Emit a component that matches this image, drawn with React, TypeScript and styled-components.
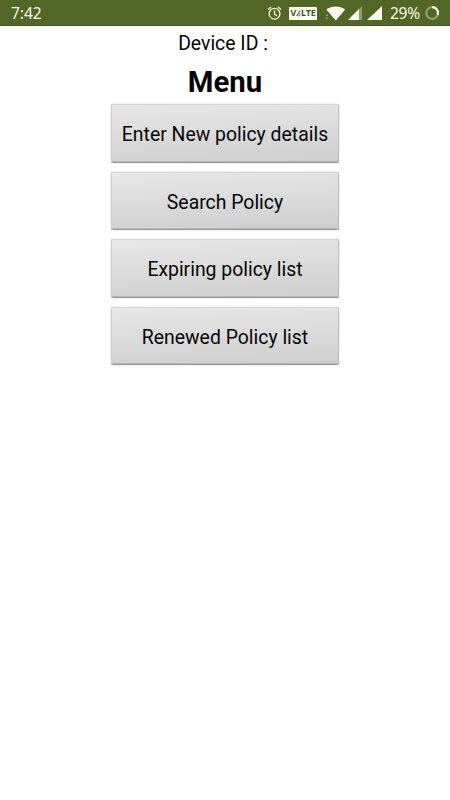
import React from "react";
import styled, { createGlobalStyle } from "styled-components";

const GlobalStyle = createGlobalStyle`
  * { box-sizing: border-box; }
  body { margin: 0; background: #fff; }
`;

const Screen = styled.div`
  width: 450px;
  height: 800px;
  background: #fff;
  color: #050505;
  font-family: Roboto, "Noto Sans", sans-serif;
  display: flex;
  flex-direction: column;
`;

const StatusBar = styled.header`
  height: 26px;
  flex: none;
  display: flex;
  align-items: center;
  padding: 0 10px 0 11px;
  background: #526625;
  border-bottom: 1px solid #435418;
  color: #f6f8ea;
  font-family: "Noto Sans", sans-serif;
  font-size: 15.6px;
  line-height: 26px;
`;

const Clock = styled.span`
  flex: 1;
  padding-top: 1px;
  letter-spacing: -0.1px;
`;

const StatusIcon = styled.svg<{ $gap: number }>`
  display: block;
  flex: none;
  margin-right: ${(p) => p.$gap}px;
`;

const VolteBadge = styled.span`
  width: 28px;
  height: 13px;
  margin: 1px 8px 0 0;
  display: flex;
  align-items: center;
  justify-content: center;
  background: #fbfcf4;
  color: #435320;
  font-size: 8.8px;
  font-weight: 700;
  letter-spacing: -0.1px;
  line-height: 13px;
`;

const Battery = styled.span`
  width: 31px;
  margin-right: 4px;
  padding-top: 1px;
  letter-spacing: -0.3px;
  white-space: nowrap;
`;

const Content = styled.main`
  display: flex;
  flex-direction: column;
  align-items: center;
`;

const DeviceLabel = styled.div`
  height: 35px;
  padding-right: 4px;
  font-size: 19.4px;
  line-height: 35px;
`;

const Title = styled.h1`
  margin: 0;
  height: 43px;
  font-size: 29.3px;
  font-weight: 700;
  line-height: 42px;
`;

const MenuList = styled.nav`
  display: grid;
  grid-auto-rows: 58.5px;
  gap: 9px;
  width: 228px;
`;

const MenuButton = styled.button`
  margin: 0;
  padding: 2.5px 0 0;
  border: 0;
  border-radius: 2px;
  background: linear-gradient(177deg, #e8e8e8, #cdcdcd);
  box-shadow: inset 0 1px 0 #d6d6d6, inset 1px 0 0 #d0d0d0, inset -1px 0 0 #bebebe,
    inset 0 -1.5px 0 #999, 0 0 2px rgba(0, 0, 0, 0.22);
  color: #050505;
  font: 400 19.4px Roboto, sans-serif;
  white-space: nowrap;
`;

const entries = [
  "Enter New policy details",
  "Search Policy",
  "Expiring policy list",
  "Renewed Policy list",
];

export default function App() {
  return (
    <Screen>
      <GlobalStyle />
      <StatusBar>
        <Clock>7:42</Clock>
        <StatusIcon $gap={7} width="15" height="16" viewBox="0 0 15 16" fill="none" stroke="#f6f8ea" strokeWidth="1.3">
          <circle cx="7.5" cy="8.8" r="5.4" />
          <path d="M7.5 5.5v3.6l2.4 1.5M1 4.6l3-2.5M14 4.6l-3-2.5" />
        </StatusIcon>
        <VolteBadge>
          <span>V</span>
          <svg width="5" height="9" viewBox="0 0 5 9" fill="none" stroke="#526625">
            <path d="M0.6 7L4.2 1.4" />
            <circle cx="2.8" cy="5.8" r="1.2" strokeWidth="0.8" />
          </svg>
          <span>LTE</span>
        </VolteBadge>
        <StatusIcon $gap={2} width="21" height="16" viewBox="0 0 21 16">
          <path d="M1.5 4.8C6.5 0.4 15 0.4 20 4.8L10.8 15.6Z" fill="#fdfef5" />
          <path d="M0.5 11L2 9L3.5 11ZM0.5 12.5L2 14.5L3.5 12.5Z" fill="#99a67a" />
        </StatusIcon>
        <StatusIcon $gap={5} width="14" height="14" viewBox="0 0 14 14">
          <path d="M0 14L14 0V14Z" fill="#8f9c70" />
          <path d="M0 14L11 3V14Z" fill="#fdfef5" />
        </StatusIcon>
        <StatusIcon $gap={8} width="15" height="14" viewBox="0 0 15 14">
          <path d="M0 14L15 0V14Z" fill="#fdfef5" />
        </StatusIcon>
        <Battery>29%</Battery>
        <StatusIcon $gap={0} width="15" height="15" viewBox="0 0 15 15" fill="none" strokeWidth="2.2">
          <circle cx="7.2" cy="8" r="5.9" stroke="#91a06f" />
          <path d="M7.2 2.1A5.9 5.9 0 0 1 12.7 10" stroke="#f6f8ea" />
        </StatusIcon>
      </StatusBar>
      <Content>
        <DeviceLabel>Device ID :</DeviceLabel>
        <Title>Menu</Title>
        <MenuList>
          {entries.map((label) => (
            <MenuButton key={label} type="button">{label}</MenuButton>
          ))}
        </MenuList>
      </Content>
    </Screen>
  );
}
